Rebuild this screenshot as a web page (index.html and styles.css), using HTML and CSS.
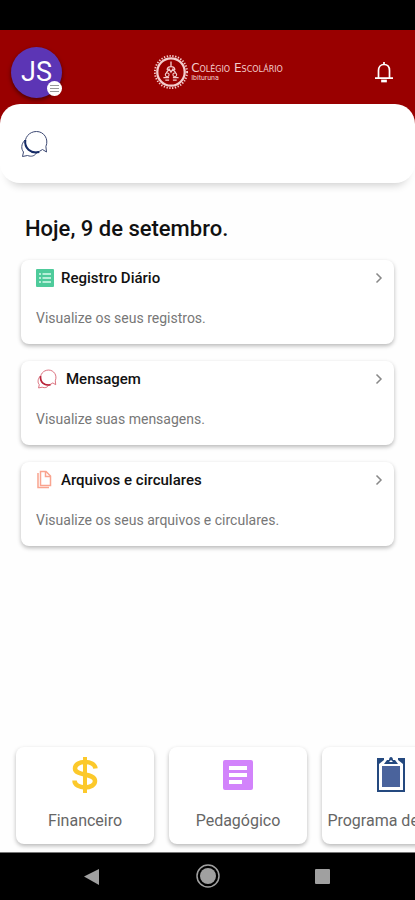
FILE: index.html
```html
<!DOCTYPE html>
<html lang="pt-BR">
<head>
  <meta charset="UTF-8" />
  <meta name="viewport" content="width=device-width, initial-scale=1" />
  <title>Colégio Escolário</title>
  <link rel="stylesheet" href="styles.css">
</head>
<body>

  <div class="status-bar"></div>

  <header class="header">
    <button class="avatar" aria-label="Menu">
      JS
      <span class="avatar-menu">
        <svg width="9" height="9" viewBox="0 0 9 9" stroke="#999" stroke-width="1"><path d="M0 1.5h9M0 4.5h9M0 7.5h9"/></svg>
      </span>
    </button>
    <div class="brand">
      <svg width="36" height="36" viewBox="0 0 38 38" fill="none" stroke="#f3cccc">
        <circle cx="19" cy="19" r="14.5" stroke-width="2.4"/>
        <circle cx="19" cy="19" r="17" stroke-width="2" stroke-dasharray="1.4 1.6"/>
        <path d="M19 8v5M15 17c0-5 8-5 8 0M14 20l3-4 2 3 2-3 3 4" stroke-width="1.4"/>
        <circle cx="15" cy="22" r="2" stroke-width="1.2"/>
        <circle cx="23" cy="22" r="2" stroke-width="1.2"/>
        <path d="M11 25h6M21 25h6M13 27.5h4M21 27.5h4" stroke-width="1.4"/>
      </svg>
      <div class="brand-text">
        <span class="brand-name">Colégio Escolário</span>
        <span class="brand-place">Ibituruna</span>
      </div>
    </div>
    <button class="bell" aria-label="Notificações">
      <svg width="20" height="22" viewBox="0 0 20 22" fill="none" stroke="#fff" stroke-width="1.7">
        <path d="M4.5 17V9.5C4.5 6 6.5 3.5 10 3.5s5.500 2.500 5.500 6V17"/>
        <path d="M1 17.200h18M10 1v2.500"/>
        <path d="M8 19.500h4v1H8z" fill="#fff"/>
      </svg>
    </button>
  </header>

  <section class="panel">
    <button class="panel-chat" aria-label="Mensagens">
      <svg width="28" height="28" viewBox="0 0 28 28" fill="none" stroke="#3d4973" stroke-width="1">
        <path d="M5 10c-4 4-4 9-1.500 12L2.500 26.500l5-1c4 1.500 7 .5 9-2.500"/>
        <path d="M22.500 19.500l4 2.500-.6-5.500C29 9 24 1.500 16.500 1.500S4 8 5.500 14.500s9 11 17 5z"/>
        <path d="M5.300 10c-1 8 5 14 14 12" stroke="#152b66" stroke-width="2"/>
      </svg>
    </button>
  </section>

  <main class="main">
    <h1>Hoje, 9 de setembro.</h1>

    <a class="card" href="#registro">
      <span class="card-title">
        <svg width="18" height="18" viewBox="0 0 18 18">
          <rect width="18" height="18" rx="1" fill="#4ecb9b"/>
          <path d="M3 5h2M6.500 5H15M3 9h2M6.500 9H15M3 13h2M6.500 13H15" stroke="#d9fbed" stroke-width="1.5"/>
        </svg>
        <strong>Registro Diário</strong>
        <svg class="chevron" width="8" height="12" viewBox="0 0 8 12"><path d="M1.500 1.500L6 6l-4.500 4.500"/></svg>
      </span>
      <span class="card-text">Visualize os seus registros.</span>
    </a>

    <a class="card" href="#mensagem">
      <span class="card-title">
        <svg width="23" height="20" viewBox="0 0 30 28" fill="none" stroke="#d55b6b" stroke-width="1.2">
          <path d="M5 10c-4 4-4 9-1.500 12L2.500 26.500l5-1c4 1.500 7 .5 9-2.500"/>
          <path d="M22.500 19.500l4 2.500-.6-5.500C29 9 24 1.500 16.500 1.500S4 8 5.500 14.500s9 11 17 5z"/>
          <path d="M5.300 10c-1 8 5 14 14 12" stroke="#b92238" stroke-width="2.4"/>
        </svg>
        <strong>Mensagem</strong>
        <svg class="chevron" width="8" height="12" viewBox="0 0 8 12"><path d="M1.500 1.500L6 6l-4.500 4.500"/></svg>
      </span>
      <span class="card-text">Visualize suas mensagens.</span>
    </a>

    <a class="card" href="#arquivos">
      <span class="card-title">
        <svg width="18" height="20" viewBox="0 0 18 20" fill="none" stroke="#f9a48f" stroke-width="1.5">
          <path d="M4.500 1.500H10L14.500 6v9.500h-10z"/>
          <path d="M9.500 1.500v5h5"/>
          <path d="M2 3v14.500h11" stroke-width="1.5"/>
        </svg>
        <strong>Arquivos e circulares</strong>
        <svg class="chevron" width="8" height="12" viewBox="0 0 8 12"><path d="M1.500 1.500L6 6l-4.500 4.500"/></svg>
      </span>
      <span class="card-text">Visualize os seus arquivos e circulares.</span>
    </a>
  </main>

  <nav class="shortcuts">
    <a class="shortcut" href="#financeiro">
      <svg width="36" height="36" viewBox="0 0 36 36" fill="none" stroke="#fcc92b">
        <path d="M28.500 11.500C28 7.500 23.500 5 18 5S8 7.500 8 11.500c0 8 20 4 20 12.500 0 4-4.500 6.500-10 6.500S7.500 28 7.500 23.500" stroke-width="4.5"/>
        <path d="M18 0v36" stroke-width="4"/>
      </svg>
      <span>Financeiro</span>
    </a>
    <a class="shortcut" href="#pedagogico">
      <svg width="36" height="36" viewBox="0 0 36 36">
        <rect x="3" y="3" width="30" height="30" rx="2" fill="#d283fb"/>
        <path d="M9 11h18M9 18h18M9 25h13" stroke="#fff" stroke-width="4"/>
      </svg>
      <span>Pedagógico</span>
    </a>
    <a class="shortcut" href="#programa">
      <svg width="36" height="36" viewBox="0 0 36 36">
        <path d="M4 1h28v34H4z" fill="#24497f"/>
        <path d="M6 7l5-4V0h14v3l5 4v26H6z" fill="#fff"/>
        <rect x="9" y="9" width="18" height="21" fill="#4a639c"/>
        <path d="M11 7l3-4h2c0-4 4-4 4 0h2l3 4z" fill="#24497f"/>
        <path d="M16 5l2-2 2 2z" fill="#fff"/>
      </svg>
      <span>Programa de Aula</span>
    </a>
  </nav>

  <div class="system-bar">
    <button aria-label="Voltar">
      <svg width="26" height="26" viewBox="0 0 26 26"><path d="M4 12.500L19 5v16z" fill="#a0a0a0"/></svg>
    </button>
    <button aria-label="Início">
      <svg width="26" height="26" viewBox="0 0 26 26"><circle cx="13" cy="12" r="11" fill="none" stroke="#a0a0a0" stroke-width="1.5"/><circle cx="13" cy="12" r="8" fill="#a0a0a0"/></svg>
    </button>
    <button aria-label="Recentes">
      <svg width="26" height="26" viewBox="0 0 26 26"><rect x="5" y="5" width="15" height="15" rx="1" fill="#a0a0a0"/></svg>
    </button>
  </div>

</body>
</html>
```
FILE: styles.css
```css
* {
  box-sizing: border-box;
}

body {
  margin: 0;
  min-height: 100vh;
  display: flex;
  flex-direction: column;
  background: #fefefe;
  font-family: Roboto, sans-serif;
  color: #111;
  overflow-x: hidden;
}

button {
  padding: 0;
  border: none;
  background: none;
  font-family: inherit;
}

a {
  color: inherit;
  text-decoration: none;
}

svg {
  display: block;
  flex-shrink: 0;
}

.status-bar {
  height: 30px;
  background: #000;
}

.header {
  display: flex;
  align-items: center;
  justify-content: space-between;
  height: 98px;
  padding: 0 21px 14px 11px;
  background: #990000;
}

.avatar {
  position: relative;
  width: 51px;
  height: 51px;
  border-radius: 50%;
  background: #5c35b5;
  box-shadow: 0 2px 4px rgba(0, 0, 0, 0.5);
  color: #fff;
  font-size: 27px;
}

.avatar-menu {
  position: absolute;
  right: 0;
  bottom: 2px;
  display: flex;
  align-items: center;
  justify-content: center;
  width: 15px;
  height: 15px;
  border-radius: 50%;
  background: #fff;
}

.brand {
  display: flex;
  align-items: center;
  gap: 2px;
  color: #f3cccc;
}

.brand-text {
  display: flex;
  flex-direction: column;
}

.brand-name {
  font-family: "DejaVu Sans", sans-serif;
  font-size: 12px;
  line-height: 12px;
  font-variant: small-caps;
}

.brand-place {
  font-size: 7px;
  line-height: 8px;
}

.panel {
  height: 79px;
  margin-top: -24px;
  padding: 26px 20px;
  border-radius: 20px;
  background: #fff;
  box-shadow: 0 10px 8px -8px rgba(0, 0, 0, 0.2);
}

.main {
  flex-grow: 1;
  display: flex;
  flex-direction: column;
  gap: 17px;
  padding: 32px 21px;
}

h1 {
  margin: 0 4px;
  font-size: 22px;
  line-height: 28px;
  font-weight: 500;
}

.card {
  display: flex;
  flex-direction: column;
  gap: 20px;
  height: 84px;
  padding: 8px 11px 16px 15px;
  border-radius: 8px;
  background: #fff;
  box-shadow: 0 2px 4px rgba(0, 0, 0, 0.28);
}

.card-title {
  display: flex;
  align-items: center;
  gap: 7px;
  height: 20px;
  font-size: 15px;
}

.card-title strong {
  font-weight: 500;
}

.chevron {
  margin-left: auto;
  fill: none;
  stroke: #888;
  stroke-width: 1.5;
}

.card-text {
  color: #777;
  font-size: 14px;
  line-height: 20px;
}

.shortcuts {
  display: flex;
  gap: 15px;
  padding: 8px 16px;
  overflow: hidden;
}

.shortcut {
  flex: 0 0 138px;
  display: flex;
  flex-direction: column;
  align-items: center;
  gap: 18px;
  height: 97px;
  padding-top: 10px;
  border-radius: 8px;
  background: #fff;
  box-shadow: 0 2px 4px rgba(0, 0, 0, 0.28);
  color: #666;
  font-size: 16px;
  line-height: 20px;
  white-space: nowrap;
}

.system-bar {
  display: flex;
  justify-content: center;
  align-items: center;
  gap: 89px;
  height: 48px;
  border-top: 1px solid #777;
  background: #000;
}
```
